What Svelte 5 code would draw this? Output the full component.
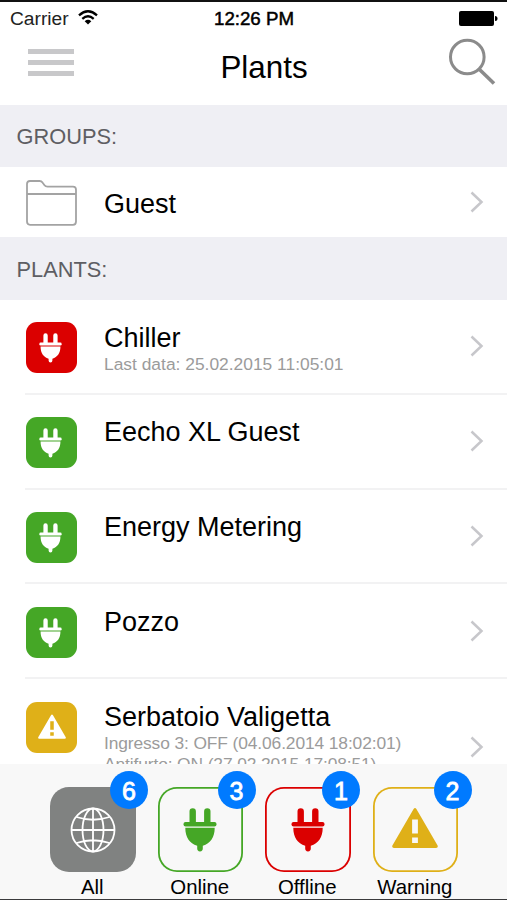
<script lang="ts">
	type Status = 'all' | 'online' | 'offline' | 'warning';

	interface Plant {
		name: string;
		status: Status;
		details: string[];
	}

	const groups = ['Guest'];

	const plants: Plant[] = [
		{ name: 'Chiller', status: 'offline', details: ['Last data: 25.02.2015 11:05:01'] },
		{ name: 'Eecho XL Guest', status: 'online', details: [] },
		{ name: 'Energy Metering', status: 'online', details: [] },
		{ name: 'Pozzo', status: 'online', details: [] },
		{
			name: 'Serbatoio Valigetta',
			status: 'warning',
			details: ['Ingresso 3: OFF (04.06.2014 18:02:01)', 'Antifurto: ON (27.02.2015 17:08:51)'],
		},
	];

	const tabs: { id: Status; label: string; count: number; shift: number }[] = [
		{ id: 'all', label: 'All', count: 6, shift: 60 },
		{ id: 'online', label: 'Online', count: 3, shift: 60 },
		{ id: 'offline', label: 'Offline', count: 1, shift: 57 },
		{ id: 'warning', label: 'Warning', count: 2, shift: 61 },
	];

	let active = $state<Status>('all');
</script>

{#snippet plug()}
	<svg class="glyph" viewBox="0 0 34 44" fill="currentColor">
		<path d="M6.5 15V3.5a3.2 3.2 0 0 1 6.4 0V15ZM21.1 15V3.5a3.2 3.2 0 0 1 6.4 0V15Z" />
		<rect x="0.5" y="14" width="33" height="4.4" rx="2" />
		<path d="M2.3 19.8H31.7C31.7 29.5 27.5 35.5 19.8 37.8V40.6a2.8 2.8 0 0 1-5.6 0V37.8C6.5 35.5 2.3 29.5 2.3 19.8Z" />
	</svg>
{/snippet}

{#snippet alert()}
	<svg class="glyph wide" viewBox="0 0 46 40" fill="currentColor" fill-rule="evenodd">
		<path d="M21.6 1Q23 -.8 24.4 1L45.6 37.5Q46.4 40 44 40H2Q-.4 40 .4 37.5ZM20.1 11.5V25.5H25.9V11.5ZM20.1 29.5V35H25.9V29.5Z" />
	</svg>
{/snippet}

{#snippet chevron()}
	<svg class="chevron" width="14" height="22" viewBox="0 0 14 22">
		<path d="M1.5 1.5L11.5 11L1.5 20.5" fill="none" stroke="#c7c7cb" stroke-width="2.5" />
	</svg>
{/snippet}

<div class="screen">
	<div class="status">
		<span class="carrier">
			Carrier
			<svg width="20" height="15" viewBox="0 0 20 15" fill="none" stroke="#000" stroke-width="2.3">
				<path d="M1 5.3Q10-2.8 19 5.3M4.3 8.8Q10 3.8 15.7 8.8" />
				<path d="M6.7 11.2Q10 8.3 13.3 11.2L10 14.6Z" fill="#000" stroke="none" />
			</svg>
		</span>
		<span class="time">12:26 PM</span>
		<svg class="battery" width="39" height="15" viewBox="0 0 39 15">
			<rect width="35" height="15" rx="2" />
			<path d="M36 5Q38.5 5 38.5 7.5T36 10Z" />
		</svg>
	</div>

	<header>
		<button class="menu" type="button" aria-label="Menu">
			<i></i><i></i><i></i>
		</button>
		<h1>Plants</h1>
		<button class="search" type="button" aria-label="Search">
			<svg width="48" height="48" viewBox="0 0 48 48" fill="none" stroke="#8b8b8b">
				<circle cx="19.3" cy="19" r="16.8" stroke-width="3" />
				<path d="M31 31L46 45.5" stroke-width="3.6" />
			</svg>
		</button>
	</header>

	<main>
		<h2>GROUPS:</h2>
		{#each groups as group}
			<div class="row group">
				<svg class="folder" width="51" height="46" viewBox="0 0 51 46" fill="none" stroke="#a3a3a3" stroke-width="1.8">
					<path d="M1 4Q1 1 4 1H13.5Q15.500 1 16.5 2.6L18.5 5.3Q19.5 6.7 21.5 6.7H47Q50 6.7 50 9.7V41.5Q50 44.8 47 44.8H4Q1 44.8 1 41.5ZM1 14H50" />
				</svg>
				<div class="name">{group}</div>
				{@render chevron()}
			</div>
		{/each}

		<h2 class="second">PLANTS:</h2>
		{#each plants as plant}
			<div class="row plant" class:tall={plant.details.length > 1}>
				<div class="badge-icon {plant.status}">
					{#if plant.status === 'warning'}{@render alert()}{:else}{@render plug()}{/if}
				</div>
				<div class="text">
					<div class="name">{plant.name}</div>
					{#each plant.details as line}
						<div class="detail">{line}</div>
					{/each}
				</div>
				{@render chevron()}
			</div>
		{/each}
	</main>

	<nav>
		{#each tabs as tab}
			<button class="tab {tab.id}" class:active={active === tab.id} type="button" onclick={() => (active = tab.id)}>
				<span class="tile">
					{#if tab.id === 'all'}
						<svg width="46" height="46" viewBox="0 0 46 46" fill="none" stroke="currentColor" stroke-width="1.8">
							<circle cx="23" cy="23" r="21.5" />
							<ellipse cx="23" cy="23" rx="10.5" ry="21.5" />
							<path d="M23 1.5V44.5M1.5 23H44.5M6.5 10Q23 15.5 39.5 10M6.5 36Q23 30.5 39.5 36" />
						</svg>
					{:else if tab.id === 'warning'}
						{@render alert()}
					{:else}
						{@render plug()}
					{/if}
					<span class="count" style:left="{tab.shift}px">{tab.count}</span>
				</span>
				<span class="label">{tab.label}</span>
			</button>
		{/each}
	</nav>
</div>

<style>
	:global(body) {
		background: #fff;
	}
	.screen {
		box-sizing: border-box;
		width: 507px;
		height: 900px;
		display: flex;
		flex-direction: column;
		overflow: hidden;
		border-top: 2px solid #111;
		border-bottom: 1px solid #3a3a3c;
		background: #fff;
		color: #000;
		font-family: 'Liberation Sans', Helvetica, Arial, sans-serif;
	}
	button {
		padding: 0;
		border: 0;
		background: none;
		color: inherit;
		font: inherit;
		cursor: pointer;
	}
	svg {
		display: block;
		flex: none;
	}
	.status {
		flex: none;
		height: 32px;
		padding: 0 9px 0 10px;
		display: grid;
		grid-template-columns: 1fr auto 1fr;
		align-items: center;
		font-size: 19.2px;
	}
	.carrier {
		display: flex;
		align-items: center;
		gap: 9px;
		padding-top: 1px;
		color: #222;
	}
	.carrier svg {
		margin-top: -3px;
	}
	.time {
		padding-top: 1px;
		font-size: 18.7px;
		-webkit-text-stroke: 0.5px #000;
	}
	.battery {
		justify-self: end;
	}
	header {
		flex: none;
		height: 71px;
		padding: 0 11px 0 28px;
		display: grid;
		grid-template-columns: 1fr auto 1fr;
		align-items: start;
	}
	.menu {
		width: 46px;
		margin-top: 15px;
		display: flex;
		flex-direction: column;
		gap: 6px;
	}
	.menu i {
		height: 5px;
		background: #c8c8ca;
	}
	h1 {
		margin: 16px 0 0 4px;
		font-size: 31.4px;
		line-height: 36px;
		font-weight: 400;
	}
	.search {
		justify-self: end;
		margin-top: 4px;
	}
	main {
		flex: 1;
		min-height: 0;
		overflow: hidden;
	}
	h2 {
		box-sizing: border-box;
		height: 62px;
		margin: 0;
		padding-left: 16.5px;
		background: #efeff4;
		color: #5e5e63;
		font-size: 21.8px;
		line-height: 64px;
		font-weight: 400;
	}
	h2.second {
		height: 63px;
		line-height: 65px;
	}
	.row {
		display: flex;
		margin-left: 25px;
		padding: 0 23px 0 1px;
	}
	.chevron {
		margin-left: auto;
	}
	.group {
		height: 70px;
		align-items: center;
	}
	.folder {
		margin-top: 1px;
	}
	.name {
		font-size: 27px;
		line-height: 31px;
		white-space: nowrap;
	}
	.group .name {
		margin: 4px 0 0 27px;
	}
	.plant {
		box-sizing: border-box;
		height: 94.8px;
		border-bottom: 2px solid #f2f2f3;
	}
	.plant.tall {
		height: 138px;
	}
	.badge-icon {
		flex: none;
		display: flex;
		align-items: center;
		justify-content: center;
		width: 51px;
		height: 51px;
		margin-top: 22.4px;
		border-radius: 11px;
		color: #fff;
	}
	.badge-icon .glyph {
		width: 23px;
		height: 30px;
	}
	.badge-icon.online .glyph,
	.badge-icon.offline .glyph {
		margin: 1px 2px 0 0;
	}
	.badge-icon .wide {
		width: 28px;
		height: 25px;
		margin-bottom: 2px;
	}
	.badge-icon.offline {
		background: #db0000;
	}
	.badge-icon.online {
		background: #45a726;
	}
	.badge-icon.warning {
		background: #dfb018;
	}
	.text {
		margin: 22.5px 0 0 27px;
	}
	.detail {
		color: #9b9b9b;
		font-size: 17.4px;
		line-height: 21px;
		white-space: nowrap;
	}
	.tall .detail {
		letter-spacing: -0.12px;
	}
	.plant .chevron {
		align-self: center;
	}
	nav {
		flex: none;
		box-sizing: border-box;
		height: 135px;
		padding: 23px 0 0 50px;
		display: flex;
		gap: 22px;
		background: #f8f8f8;
	}
	.tab {
		width: 85.5px;
		display: flex;
		flex-direction: column;
		align-items: center;
		gap: 3px;
	}
	.tile {
		position: relative;
		box-sizing: border-box;
		width: 85.5px;
		height: 85px;
		display: flex;
		align-items: center;
		justify-content: center;
		border-radius: 19px;
		box-shadow: inset 0 0 0 1.8px currentColor;
	}
	.tile .glyph {
		width: 34px;
		height: 44px;
	}
	.tile .wide {
		width: 46px;
		height: 40px;
		margin-bottom: 4px;
	}
	.all .tile {
		background: #808281;
		box-shadow: none;
		color: #fff;
	}
	.online .tile {
		color: #45a726;
	}
	.offline .tile {
		color: #db0000;
	}
	.warning .tile {
		color: #dfb018;
	}
	.count {
		position: absolute;
		top: -16px;
		width: 38px;
		height: 38px;
		border-radius: 50%;
		background: #007aff;
		color: #fff;
		font-size: 25px;
		line-height: 40px;
		text-align: center;
		-webkit-text-stroke: 0.8px #fff;
	}
	.label {
		margin-left: -1px;
		font-size: 20.4px;
		line-height: 24px;
	}
</style>
